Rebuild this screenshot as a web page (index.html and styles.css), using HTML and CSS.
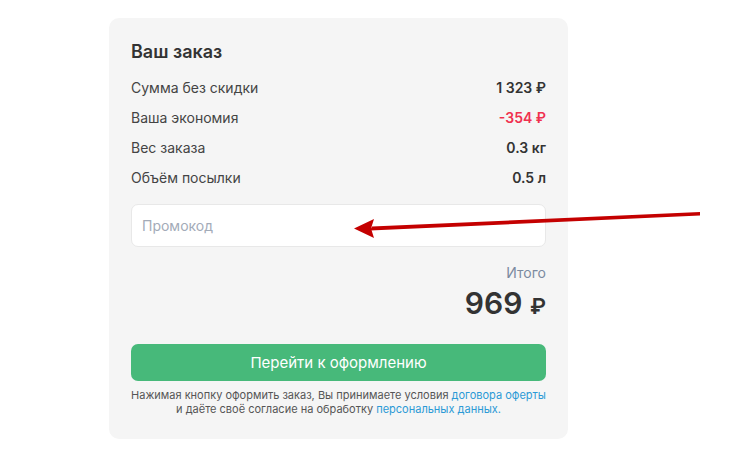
FILE: index.html
```html
<!DOCTYPE html>
<html lang="ru">
<head>
<meta charset="utf-8">
<link rel="stylesheet" href="styles.css">
</head>
<body>
<div class="page">
  <section class="card">
    <h2 class="title">Ваш заказ</h2>
    <div class="rows">
      <div class="row"><span class="label">Сумма без скидки</span><span class="value">1 323 ₽</span></div>
      <div class="row"><span class="label">Ваша экономия</span><span class="value red">-354 ₽</span></div>
      <div class="row"><span class="label">Вес заказа</span><span class="value">0.3 кг</span></div>
      <div class="row"><span class="label">Объём посылки</span><span class="value">0.5 л</span></div>
    </div>
    <div class="promo"><input class="promo-input" type="text" placeholder="Промокод"></div>
    <div class="total">
      <div class="total-label">Итого</div>
      <div class="total-sum">969 <span class="rub">₽</span></div>
    </div>
    <button class="btn">Перейти к оформлению</button>
    <p class="note">Нажимая кнопку оформить заказ, Вы принимаете условия <a href="#">договора оферты</a><br>и даёте своё согласие на обработку <a href="#">персональных данных.</a></p>
  </section>
  <svg class="arrow" width="752" height="456" viewBox="0 0 752 456">
    <path d="M700 212 L372 226.5 L370 230.5 L700 215.5 Z" fill="#c40000"/>
    <path d="M354 228.5 L374 219 L371 228.5 L374 238 Z" fill="#c40000"/>
  </svg>
</div>
</body>
</html>
```
FILE: styles.css
```css
* { box-sizing: border-box; }
html, body { margin: 0; padding: 0; background: #fff; }
body { font-family: Inter, "Noto Sans", sans-serif; color: #333; }
.page { position: relative; width: 752px; height: 456px; padding: 18px 0 0 109px; }
.card {
  width: 459px;
  height: 421px;
  background: #f5f5f5;
  border-radius: 10px;
  padding: 22px 22px 0 22px;
  display: flex;
  flex-direction: column;
}
.title { margin: 0; font-size: 18px; font-weight: 600; color: #333; line-height: 24px; }
.rows { margin-top: 8px; display: flex; flex-direction: column; }
.row { display: flex; justify-content: space-between; align-items: center; height: 30px; font-size: 14px; }
.label { color: #444; }
.value { font-weight: 600; color: #333; }
.value.red { color: #f0304f; }
.promo { margin-top: 12px; }
.promo-input {
  width: 100%;
  height: 43px;
  border: 1px solid #e8e8e8;
  border-radius: 7px;
  background: #fff;
  padding: 0 10px;
  font-family: inherit;
  font-size: 14px;
  color: #333;
  outline: none;
}
.promo-input::placeholder { color: #a3abb8; }
.total { margin-top: 16px; display: flex; flex-direction: column; align-items: flex-end; }
.total-label { font-size: 14px; color: #7b8aa0; line-height: 20px; }
.total-sum { font-size: 30px; font-weight: 600; color: #333; line-height: 40px; margin-top: 0; }
.total-sum .rub { font-size: 22px; }
.btn {
  margin-top: 18px;
  width: 100%;
  height: 37px;
  border: none;
  border-radius: 7px;
  background: #47b97a;
  color: #fff;
  font-family: inherit;
  font-size: 15px;
  cursor: pointer;
}
.note { margin: 7px 0 0; font-size: 11px; line-height: 14px; text-align: center; color: #555; }
.note a { color: #2b9ad6; text-decoration: none; }
.arrow { position: absolute; left: 0; top: 0; pointer-events: none; }
```
